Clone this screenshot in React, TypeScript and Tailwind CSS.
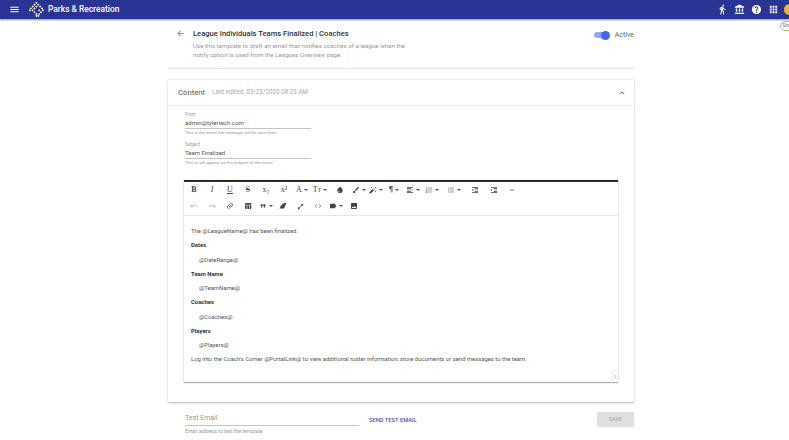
import type { ReactNode } from 'react';
import {
  MdAccountBalance,
  MdApps,
  MdArrowBack,
  MdAutoFixHigh,
  MdBrush,
  MdCode,
  MdDirectionsWalk,
  MdExpandLess,
  MdFormatAlignLeft,
  MdFormatIndentDecrease,
  MdFormatIndentIncrease,
  MdFormatListBulleted,
  MdFormatListNumbered,
  MdFormatQuote,
  MdHelp,
  MdImage,
  MdInsertLink,
  MdLabel,
  MdMenu,
  MdOpenInFull,
  MdRedo,
  MdRemove,
  MdTableChart,
  MdUndo,
  MdWaterDrop,
} from 'react-icons/md';

const Caret = () => <span className="ml-[2px] w-0 h-0 border-x-[2px] border-x-transparent border-t-[2px] border-t-[#555]" />;

function Tool({ children, w = 'w-[18px]', caret }: { children: ReactNode; w?: string; caret?: boolean }) {
  return (
    <div className={`${w} h-[16px] flex items-center justify-center text-[#444] shrink-0`}>
      {children}
      {caret && <Caret />}
    </div>
  );
}

const Serif = ({ children, cls = '' }: { children: ReactNode; cls?: string }) => (
  <span className={`font-['Liberation_Serif',serif] text-[8px] leading-none ${cls}`}>{children}</span>
);

function Eraser() {
  return (
    <svg width="8" height="8" viewBox="0 0 16 16" fill="currentColor">
      <path d="M10 2h5l-5 11H1l3-6z" />
    </svg>
  );
}

function Logo() {
  const dots = [
    [7, 0], [9, 2], [5, 2], [7, 4], [3, 4], [11, 4], [1, 6], [5, 6], [13, 6], [0, 8], [3, 8], [10, 8], [14, 8],
    [5, 10], [12, 10], [7, 12], [10, 12], [7, 14], [9, 14],
  ];
  return (
    <svg width="15" height="15" viewBox="0 0 16 16" fill="#fff" className="shrink-0">
      {dots.map(([x, y], i) => (
        <rect key={i} x={x} y={y} width="1.7" height="1.7" transform={`rotate(45 ${x + 0.85} ${y + 0.85})`} />
      ))}
    </svg>
  );
}

function Field({ label, value, hint }: { label: string; value: string; hint: string }) {
  return (
    <div className="w-[126px]">
      <div className="text-[4.5px] leading-[6px] text-[#999]">{label}</div>
      <div className="h-[11px] text-[6px] leading-[10px] text-[#555] border-b border-[#c4c4c4]">{value}</div>
      <div className="text-[4.4px] leading-[8px] text-[#999] whitespace-nowrap">{hint}</div>
    </div>
  );
}

const Line = ({ children, cls = '' }: { children: ReactNode; cls?: string }) => (
  <p className={`h-[14.25px] leading-[14px] whitespace-nowrap ${cls}`}>{children}</p>
);

export default function App() {
  return (
    <div className="relative h-screen overflow-hidden bg-white font-['Roboto',sans-serif]">
      <header className="relative h-[19px] bg-[#2a3593] shadow-[0_1px_2px_rgba(0,0,0,0.45)] flex items-center text-white">
        <MdMenu className="ml-[9px] text-[11px]" />
        <div className="ml-[9px]">
          <Logo />
        </div>
        <span className="ml-[4px] text-[8.4px] font-medium">Parks &amp; Recreation</span>
        <div className="ml-auto flex items-center">
          <MdDirectionsWalk className="text-[11px] mr-[6px]" />
          <MdAccountBalance className="text-[11px] mr-[6px]" />
          <MdHelp className="text-[11px] mr-[6px]" />
          <MdApps className="text-[11px] mr-[5px]" />
          <div className="w-[11px] h-[11px] rounded-full bg-[#f5b50f] -mr-[6px]" />
        </div>
      </header>
      <div className="absolute left-[780px] top-[21px] h-[10px] w-[30px] rounded-[5px] border border-[#a9bb7c] bg-white text-[4.5px] leading-[8px] pl-[1.5px] text-[#55608f]">
        Sho
      </div>

      <main className="ml-[168px] w-[466px]">
        <section className="h-[50px] border-b border-[#e6e6e6] flex items-start">
          <MdArrowBack className="mt-[10px] ml-[8px] text-[9px] text-[#777]" />
          <div className="ml-[8px] mt-[10px]">
            <h1 className="text-[7.6px] leading-[10px] font-medium text-[#333] whitespace-nowrap">League Individuals Teams Finalized | Coaches</h1>
            <p className="mt-[3px] text-[6.2px] leading-[8.5px] text-[#999] w-[215px]">
              Use this template to draft an email that notifies coaches of a league when the notify option is used from the Leagues Overview page.
            </p>
          </div>
          <div className="ml-auto mt-[11px] flex items-center">
            <div className="relative w-[15px] h-[6px] rounded-full bg-[#98a4fb] mr-[6px]">
              <div className="absolute right-[-1px] top-[-1.5px] w-[9px] h-[9px] rounded-full bg-[#4a63f3]" />
            </div>
            <span className="text-[7px] leading-[10px] text-[#666]">Active</span>
          </div>
        </section>

        <section className="mt-[10px] h-[323px] rounded-[1px] shadow-[0_1px_2px_rgba(0,0,0,0.3)] border-t border-[#f0f0f0] bg-white">
          <div className="h-[26px] border-b border-[#eeeeee] flex items-center pl-[10px] pr-[7px]">
            <span className="text-[7.7px] text-[#555]">Content</span>
            <span className="ml-[7px] text-[6.3px] text-[#aaa]">Last edited: 03/23/2020 08:23 AM</span>
            <MdExpandLess className="ml-auto text-[10px] text-[#777]" />
          </div>

          <div className="pl-[17px] pt-[6px]">
            <Field label="From" value="admin@tylertech.com" hint="This is the email the message will be sent from" />
            <div className="mt-[5px]">
              <Field label="Subject" value="Team Finalized" hint="This is will appear as the subject of the email" />
            </div>
          </div>

          <div className="ml-[16px] mt-[13px] w-[434px] h-[202px] border-t-[2px] border-t-[#2b2b2b] shadow-[0_1px_1px_rgba(0,0,0,0.3),0_0_1px_rgba(0,0,0,0.25)]">
            <div className="h-[33.5px] border-b-[1.5px] border-[#e6e6e6] text-[8px]">
              <div className="h-[16px] flex items-center pl-[1px]">
                <Tool><Serif cls="font-bold">B</Serif></Tool>
                <Tool><Serif cls="italic">I</Serif></Tool>
                <Tool><Serif cls="underline">U</Serif></Tool>
                <Tool><Serif cls="line-through">S</Serif></Tool>
                <Tool><Serif cls="text-[6px]">x₂</Serif></Tool>
                <Tool><Serif cls="text-[6px]">x²</Serif></Tool>
                <Tool caret><Serif>A</Serif></Tool>
                <Tool caret><Serif>T<span className="text-[6px]">T</span></Serif></Tool>
                <Tool w="w-[22px]"><MdWaterDrop /></Tool>
                <Tool caret w="w-[16px]"><MdBrush /></Tool>
                <Tool caret w="w-[17px]"><MdAutoFixHigh /></Tool>
                <Tool caret w="w-[20px]"><Serif cls="font-bold">¶</Serif></Tool>
                <Tool caret><MdFormatAlignLeft /></Tool>
                <Tool caret w="w-[20px]"><MdFormatListNumbered /></Tool>
                <Tool caret w="w-[23px]"><MdFormatListBulleted /></Tool>
                <Tool w="w-[20px]"><MdFormatIndentDecrease /></Tool>
                <Tool><MdFormatIndentIncrease /></Tool>
                <Tool><MdRemove /></Tool>
              </div>
              <div className="h-[16px] flex items-center pl-[1px]">
                <Tool><MdUndo className="text-[#bbb]" /></Tool>
                <Tool><MdRedo className="text-[#bbb]" /></Tool>
                <Tool><MdInsertLink className="-rotate-45" /></Tool>
                <Tool><MdTableChart /></Tool>
                <Tool caret><MdFormatQuote /></Tool>
                <Tool w="w-[16px]"><Eraser /></Tool>
                <Tool><MdOpenInFull className="text-[7px]" /></Tool>
                <Tool><MdCode className="text-[#888]" /></Tool>
                <Tool caret><MdLabel /></Tool>
                <Tool><MdImage /></Tool>
              </div>
            </div>

            <div className="relative pl-[7px] pt-[8.5px] text-[5.9px] text-[#555]">
              <Line>The @LeagueName@ has been finalized.</Line>
              <Line cls="font-bold text-[#333]">Dates</Line>
              <Line cls="pl-[8px]">@DateRange@</Line>
              <Line cls="font-bold text-[#333]">Team Name</Line>
              <Line cls="pl-[8px]">@TeamName@</Line>
              <Line cls="font-bold text-[#333]">Coaches</Line>
              <Line cls="pl-[8px]">@Coaches@</Line>
              <Line cls="font-bold text-[#333]">Players</Line>
              <Line cls="pl-[8px]">@Players@</Line>
              <Line>Log into the Coach's Corner @PortalLink@ to view additional roster information, store documents or send messages to the team.</Line>
              <div className="absolute right-0 top-[154px] w-[7px] h-[13px] border-l border-t border-[#ededed] text-[4.5px] leading-[13px] text-center text-[#bbb]">0</div>
            </div>
          </div>
        </section>

        <section className="mt-[10px] flex items-start pl-[17px]">
          <div className="w-[174px]">
            <div className="h-[14px] border-b border-[#c4c4c4] text-[7px] leading-[13px] text-[#999]">Test Email</div>
            <div className="mt-[1px] text-[5.1px] leading-[8px] text-[#999]">Email address to test the template</div>
          </div>
          <span className="ml-[10px] mt-[4px] text-[5.75px] leading-[8px] font-medium text-[#4a57bd]">SEND TEST EMAIL</span>
          <div className="ml-auto w-[37px] h-[15px] bg-[#e0e0e0] text-[5.5px] leading-[15px] font-medium text-center text-[#b0b0b0]">SAVE</div>
        </section>
      </main>
    </div>
  );
}
